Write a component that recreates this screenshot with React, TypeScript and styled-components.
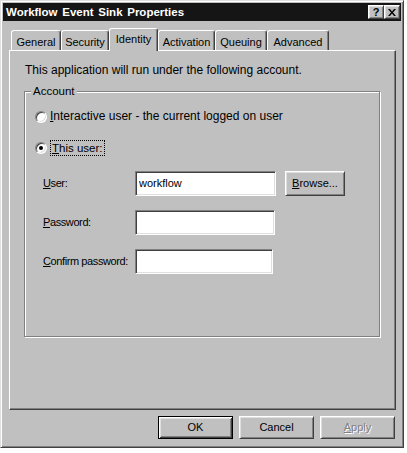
import React from "react";
import styled, { createGlobalStyle, css } from "styled-components";

const GlobalStyle = createGlobalStyle`
  html, body { margin: 0; padding: 0; background: #fff; }
  *, *::before, *::after { box-sizing: border-box; }
  body {
    font-family: "Liberation Sans", Arial, sans-serif;
    font-size: 11px;
    color: #000;
  }
`;

const raised = css`
  border: 1px solid;
  border-color: #fff #404040 #404040 #fff;
  box-shadow: inset 1px 1px 0 #dfdfdf, inset -1px -1px 0 #808080;
`;

const Window = styled.div`
  width: 404px;
  height: 448px;
  background: #c0c0c0;
  border: 1px solid;
  border-color: #dfdfdf #404040 #404040 #dfdfdf;
  box-shadow: inset 1px 1px 0 #fff, inset -1px -1px 0 #808080;
  padding: 2px;
  display: flex;
  flex-direction: column;
`;

const TitleBar = styled.div`
  height: 18px;
  background: #151515;
  color: #fff;
  display: flex;
  align-items: center;
  padding: 0 1px 0 3px;
`;

const TitleText = styled.div`
  flex: 1;
  font-weight: bold;
  font-size: 11.5px;
  line-height: 13px;
  word-spacing: 1.5px;
  white-space: nowrap;
`;

const CaptionButtons = styled.div`
  display: flex;
`;

const CaptionButton = styled.div`
  width: 16px;
  height: 14px;
  background: #c0c0c0;
  ${raised};
  display: flex;
  align-items: center;
  justify-content: center;
  color: #000;
  font-weight: bold;
  font-size: 11px;
  line-height: 11px;
`;

const Body = styled.div`
  flex: 1;
  display: flex;
  flex-direction: column;
  padding: 7px 5px 0 6px;
`;

const TabStrip = styled.div`
  height: 22px;
  display: flex;
  align-items: flex-end;
  padding-left: 2px;
`;

const Tab = styled.div<{ $w: number; $active?: boolean }>`
  position: relative;
  z-index: ${(p) => (p.$active ? 1 : 0)};
  width: ${(p) => p.$w}px;
  height: ${(p) => (p.$active ? 23 : 20)}px;
  margin-bottom: ${(p) => (p.$active ? -1 : 0)}px;
  background: #c0c0c0;
  border-top: 1px solid #fff;
  border-left: 1px solid #fff;
  border-right: 1px solid #404040;
  box-shadow: inset -1px 0 0 #808080;
  border-radius: 3px 3px 0 0;
  text-align: center;
  padding-top: ${(p) => (p.$active ? 4 : 5)}px;
  line-height: 13px;
  white-space: nowrap;
`;

const Panel = styled.div`
  height: 360px;
  border: 1px solid;
  border-color: #fff #404040 #404040 #fff;
  box-shadow: inset -1px -1px 0 #808080;
  padding: 13px 12px 0 14px;
`;

const Intro = styled.div`
  font-size: 12px;
  line-height: 13px;
  padding-left: 1px;
  white-space: nowrap;
`;

const GroupBox = styled.div`
  position: relative;
  margin-top: 14px;
  width: 356px;
  height: 246px;
  border: 1px solid #808080;
  box-shadow: 1px 1px 0 #fff, inset 1px 1px 0 #fff;
  padding: 18px 0 0 10px;
`;

const Legend = styled.span`
  position: absolute;
  top: -7px;
  left: 6px;
  padding: 0 2px;
  background: #c0c0c0;
  font-size: 11.5px;
  line-height: 13px;
`;

const RadioRow = styled.div<{ $gapTop?: number }>`
  display: flex;
  align-items: center;
  gap: 3px;
  margin-top: ${(p) => p.$gapTop ?? 0}px;
  font-size: 12px;
  line-height: 13px;
  white-space: nowrap;
`;

const RadioCircle = styled.span<{ $checked?: boolean }>`
  position: relative;
  width: 12px;
  height: 12px;
  flex: none;
  border-radius: 50%;
  border: 1px solid;
  border-color: #808080 #fff #fff #808080;
  background: #fff;
  box-shadow: inset 1px 1px 0 #404040, inset -1px -1px 0 #dfdfdf;
  &::after {
    content: "";
    display: ${(p) => (p.$checked ? "block" : "none")};
    position: absolute;
    left: 3px;
    top: 3px;
    width: 4px;
    height: 4px;
    border-radius: 50%;
    background: #000;
  }
`;

const FocusLabel = styled.span`
  border: 1px dotted #000;
  padding: 0 1px;
  font-size: 11.5px;
  line-height: 14px;
`;

const Key = styled.span`
  text-decoration: underline;
`;

const Form = styled.div`
  margin-top: 15px;
  margin-left: 8px;
  display: flex;
  flex-direction: column;
  gap: 14px;
`;

const FormRow = styled.div`
  display: flex;
  align-items: center;
  height: 25px;
`;

const FieldLabel = styled.label`
  width: 92px;
  flex: none;
  line-height: 13px;
  letter-spacing: -0.4px;
  white-space: nowrap;
`;

const TextBox = styled.input<{ $w: number }>`
  width: ${(p) => p.$w}px;
  height: 25px;
  flex: none;
  border: 1px solid;
  border-color: #808080 #fff #fff #808080;
  box-shadow: inset 1px 1px 0 #404040, inset -1px -1px 0 #dfdfdf;
  background: #fff;
  padding: 0 3px 2px 3px;
  margin: 0;
  font-family: "Liberation Sans", Arial, sans-serif;
  font-size: 11px;
  color: #000;
  outline: none;
  border-radius: 0;
`;

const Button = styled.div<{ $w: number; $default?: boolean; $disabled?: boolean; $h?: number }>`
  width: ${(p) => p.$w}px;
  height: ${(p) => p.$h ?? 23}px;
  flex: none;
  display: flex;
  align-items: center;
  justify-content: center;
  background: #c0c0c0;
  line-height: 13px;
  ${(p) =>
    p.$default
      ? css`
          border: 1px solid #000;
          box-shadow: inset 1px 1px 0 #fff, inset -1px -1px 0 #404040,
            inset 2px 2px 0 #dfdfdf, inset -2px -2px 0 #808080;
        `
      : raised};
  color: ${(p) => (p.$disabled ? "#808080" : "#000")};
  text-shadow: ${(p) => (p.$disabled ? "1px 1px 0 #fff" : "none")};
`;

const BrowseButton = styled(Button)`
  margin-left: 9px;
`;

const ButtonRow = styled.div`
  margin-top: 6px;
  display: flex;
  justify-content: flex-end;
  gap: 6px;
  padding-right: 1px;
`;

const tabs: { label: string; w: number; active?: boolean }[] = [
  { label: "General", w: 50 },
  { label: "Security", w: 48 },
  { label: "Identity", w: 49, active: true },
  { label: "Activation", w: 57 },
  { label: "Queuing", w: 52 },
  { label: "Advanced", w: 62 },
];

export default function App() {
  return (
    <>
      <GlobalStyle />
      <Window>
        <TitleBar>
          <TitleText>Workflow Event Sink Properties</TitleText>
          <CaptionButtons>
            <CaptionButton>?</CaptionButton>
            <CaptionButton>
              <svg width="8" height="7" viewBox="0 0 8 7">
                <path d="M0 0h2l2 2.5L6 0h2L5 3.5 8 7H6L4 4.5 2 7H0l3-3.5z" fill="#000" />
              </svg>
            </CaptionButton>
          </CaptionButtons>
        </TitleBar>
        <Body>
          <TabStrip>
            {tabs.map((t) => (
              <Tab key={t.label} $w={t.w} $active={t.active}>
                {t.label}
              </Tab>
            ))}
          </TabStrip>
          <Panel>
            <Intro>This application will run under the following account.</Intro>
            <GroupBox>
              <Legend>Account</Legend>
              <RadioRow>
                <RadioCircle />
                <span>
                  <Key>I</Key>nteractive user - the current logged on user
                </span>
              </RadioRow>
              <RadioRow $gapTop={17}>
                <RadioCircle $checked />
                <FocusLabel>
                  <Key>T</Key>his user:
                </FocusLabel>
              </RadioRow>
              <Form>
                <FormRow>
                  <FieldLabel>
                    <Key>U</Key>ser:
                  </FieldLabel>
                  <TextBox $w={141} defaultValue="workflow" />
                  <BrowseButton $w={60} $h={25}>
                    <span>
                      <Key>B</Key>rowse...
                    </span>
                  </BrowseButton>
                </FormRow>
                <FormRow>
                  <FieldLabel>
                    <Key>P</Key>assword:
                  </FieldLabel>
                  <TextBox $w={140} />
                </FormRow>
                <FormRow>
                  <FieldLabel>
                    <Key>C</Key>onfirm password:
                  </FieldLabel>
                  <TextBox $w={138} />
                </FormRow>
              </Form>
            </GroupBox>
          </Panel>
          <ButtonRow>
            <Button $w={75} $default>
              OK
            </Button>
            <Button $w={75}>Cancel</Button>
            <Button $w={75} $disabled>
              <span>
                <Key>A</Key>pply
              </span>
            </Button>
          </ButtonRow>
        </Body>
      </Window>
    </>
  );
}
